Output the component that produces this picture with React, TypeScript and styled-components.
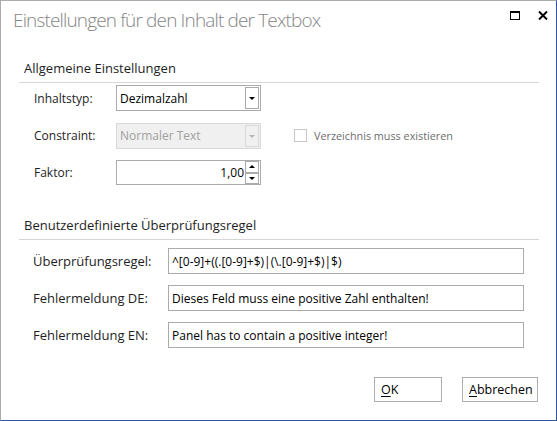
import React from "react";
import styled, { createGlobalStyle } from "styled-components";

const GlobalStyle = createGlobalStyle`
  html, body {
    margin: 0;
    padding: 0;
    background: #ffffff;
  }
  body {
    font-family: "Segoe UI", "Open Sans", "Noto Sans", sans-serif;
    font-size: 12px;
    color: #1e1e1e;
  }
`;

const Window = styled.div`
  box-sizing: border-box;
  width: 557px;
  height: 421px;
  background: #ffffff;
  border-left: 1px solid #ababab;
  border-top: 1px solid #ababab;
  border-right: 1px solid #2b579a;
  border-bottom: 1px solid #2b579a;
  display: flex;
  flex-direction: column;
`;

const TitleBar = styled.div`
  height: 58px;
  display: flex;
  justify-content: space-between;
  align-items: flex-start;
  padding-left: 12px;
`;

const Title = styled.div`
  font-family: "Segoe UI Light", "Open Sans", sans-serif;
  font-weight: 300;
  font-size: 19px;
  line-height: 26px;
  margin-top: 6px;
  color: #858585;
  letter-spacing: -0.85px;
`;

const WindowButtons = styled.div`
  display: flex;
  gap: 18px;
  padding-top: 10px;
  padding-right: 8px;
`;

const Section = styled.section<{ $top?: number }>`
  margin: ${(p) => p.$top ?? 0}px 17px 0 18px;
`;

const SectionHeader = styled.div`
  padding: 0 0 5px 5px;
  height: 18px;
  line-height: 18px;
  font-size: 13px;
  border-bottom: 1px solid #d6d6d6;
`;

const Rows = styled.div<{ $label: number; $gap: number; $pad: number; $indent: number }>`
  display: grid;
  grid-template-columns: ${(p) => p.$label}px auto 1fr;
  row-gap: ${(p) => p.$gap}px;
  align-items: center;
  padding: ${(p) => p.$pad}px 0 0 ${(p) => p.$indent}px;
`;

const Label = styled.label<{ $size?: number }>`
  color: #1e1e1e;
  font-size: ${(p) => p.$size ?? 12}px;
  white-space: nowrap;
`;

const Field = styled.div<{ $w: number; $h: number; $disabled?: boolean }>`
  box-sizing: border-box;
  width: ${(p) => p.$w}px;
  height: ${(p) => p.$h}px;
  border: 1px solid ${(p) => (p.$disabled ? "#d9d9d9" : "#ababab")};
  background: ${(p) => (p.$disabled ? "#f0f0f0" : "#ffffff")};
  color: ${(p) => (p.$disabled ? "#a0a0a0" : "#000000")};
  display: flex;
  align-items: center;
  padding: 0 1px 0 3px;
  white-space: nowrap;
`;

const FieldText = styled.span<{ $right?: boolean }>`
  flex: 1;
  text-align: ${(p) => (p.$right ? "right" : "left")};
  padding-right: ${(p) => (p.$right ? "1px" : "0")};
`;

const DropButton = styled.div<{ $disabled?: boolean }>`
  box-sizing: border-box;
  width: 14px;
  height: 22px;
  border: 1px solid ${(p) => (p.$disabled ? "#d9d9d9" : "#ababab")};
  background: ${(p) => (p.$disabled ? "#f0f0f0" : "#ffffff")};
  display: flex;
  align-items: center;
  justify-content: center;
  &::after {
    content: "";
    border-left: 3px solid transparent;
    border-right: 3px solid transparent;
    border-top: 3px solid ${(p) => (p.$disabled ? "#b5b5b5" : "#000000")};
    margin-top: 1px;
  }
`;

const Spinner = styled.div`
  width: 14px;
  height: 23px;
  display: flex;
  flex-direction: column;
`;

const SpinButton = styled.div<{ $up?: boolean }>`
  box-sizing: border-box;
  flex: 1;
  border: 1px solid #ababab;
  border-top-width: ${(p) => (p.$up ? "1px" : "0")};
  border-bottom-width: ${(p) => (p.$up ? "2px" : "1px")};
  display: flex;
  align-items: center;
  justify-content: center;
  &::after {
    content: "";
    border-left: 3px solid transparent;
    border-right: 3px solid transparent;
    ${(p) =>
      p.$up ? "border-bottom: 3px solid #000;" : "border-top: 3px solid #000;"}
  }
`;

const Check = styled.div`
  display: flex;
  align-items: center;
  gap: 7px;
  margin-left: 33px;
  color: #6d6d6d;
  font-size: 10.8px;
`;

const CheckBox = styled.span`
  box-sizing: border-box;
  width: 13px;
  height: 13px;
  border: 1px solid #c8c8c8;
  background: #ffffff;
`;

const Footer = styled.div`
  margin-top: auto;
  display: flex;
  justify-content: flex-end;
  gap: 20px;
  padding: 0 18px 18px 0;
`;

const Button = styled.button<{ $w: number }>`
  box-sizing: border-box;
  width: ${(p) => p.$w}px;
  height: 25px;
  border: 1px solid #adadad;
  background: #ffffff;
  font-family: inherit;
  font-size: 12.5px;
  color: #000;
  text-align: left;
  padding: 0 0 0 6px;
  u {
    text-decoration: underline;
    text-underline-offset: 2px;
  }
`;

function MaximizeIcon() {
  return (
    <svg width="10" height="9" viewBox="0 0 10 9">
      <rect x="0.5" y="0.5" width="9" height="8" fill="none" stroke="#000" />
      <rect x="0" y="0" width="10" height="2" fill="#000" />
    </svg>
  );
}

function CloseIcon() {
  return (
    <svg width="10" height="9" viewBox="0 0 10 9">
      <path d="M1 0.5 L9 8.5 M9 0.5 L1 8.5" stroke="#000" strokeWidth="2" />
    </svg>
  );
}

export default function App() {
  return (
    <>
      <GlobalStyle />
      <Window>
        <TitleBar>
          <Title>Einstellungen für den Inhalt der Textbox</Title>
          <WindowButtons>
            <MaximizeIcon />
            <CloseIcon />
          </WindowButtons>
        </TitleBar>

        <Section>
          <SectionHeader>Allgemeine Einstellungen</SectionHeader>
          <Rows $label={82} $gap={11.5} $pad={2} $indent={15}>
            <Label>Inhaltstyp:</Label>
            <Field $w={145} $h={26}>
              <FieldText>Dezimalzahl</FieldText>
              <DropButton />
            </Field>
            <span />
            <Label>Constraint:</Label>
            <Field $w={145} $h={26} $disabled>
              <FieldText>Normaler Text</FieldText>
              <DropButton $disabled />
            </Field>
            <Check>
              <CheckBox />
              Verzeichnis muss existieren
            </Check>
            <Label>Faktor:</Label>
            <Field $w={145} $h={25}>
              <FieldText $right>1,00</FieldText>
              <Spinner>
                <SpinButton $up />
                <SpinButton />
              </Spinner>
            </Field>
            <span />
          </Rows>
        </Section>

        <Section $top={31}>
          <SectionHeader>Benutzerdefinierte Überprüfungsregel</SectionHeader>
          <Rows $label={135} $gap={11} $pad={8} $indent={14}>
            <Label $size={13}>Überprüfungsregel:</Label>
            <Field $w={356} $h={26}>
              <FieldText>^[0-9]+((.[0-9]+$)|(\.[0-9]+$)|$)</FieldText>
            </Field>
            <span />
            <Label $size={13}>Fehlermeldung DE:</Label>
            <Field $w={356} $h={26}>
              <FieldText>Dieses Feld muss eine positive Zahl enthalten!</FieldText>
            </Field>
            <span />
            <Label $size={13}>Fehlermeldung EN:</Label>
            <Field $w={356} $h={26}>
              <FieldText>Panel has to contain a positive integer!</FieldText>
            </Field>
            <span />
          </Rows>
        </Section>

        <Footer>
          <Button $w={68}>
            <u>O</u>K
          </Button>
          <Button $w={76}>
            <u>A</u>bbrechen
          </Button>
        </Footer>
      </Window>
    </>
  );
}
